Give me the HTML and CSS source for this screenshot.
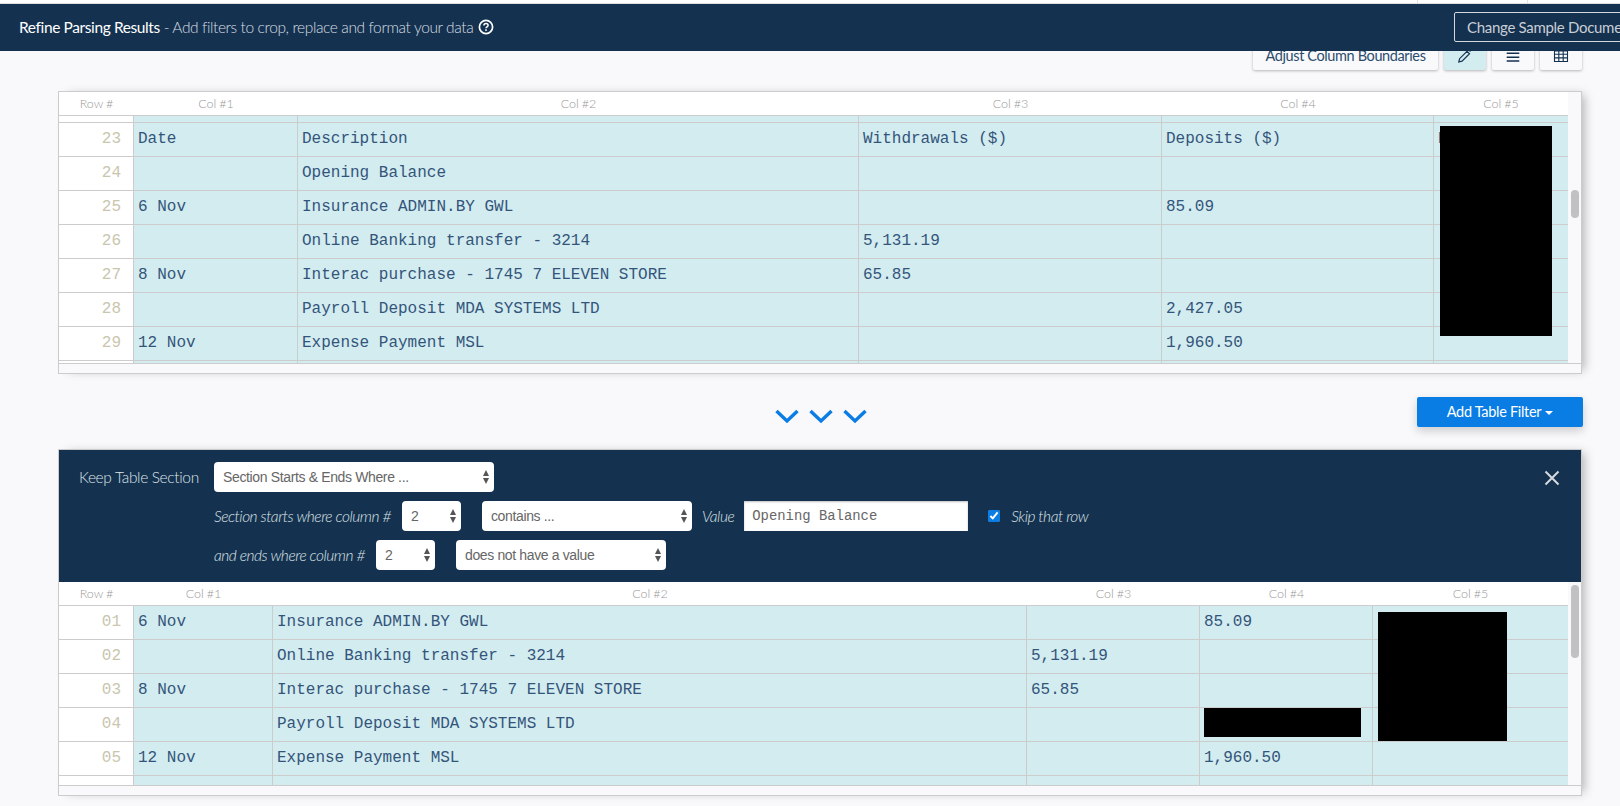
FILE: index.html
```html
<!DOCTYPE html>
<html lang="en">
<head>
    <meta charset="UTF-8">
    <title>Refine Parsing Results</title>
    <link rel="stylesheet" href="styles.css">
</head>
<body>
    <div class="top-strip"></div>
    <header class="page-header">
        <h1 class="page-title"><b>Refine Parsing Results</b> - Add filters to crop, replace and format your data</h1>
        <svg class="help-icon" viewBox="0 0 16 16" width="16" height="16">
            <circle cx="8" cy="8" r="6.600" fill="none" stroke="#fff" stroke-width="1.700"/>
            <path d="M5.900 6.400c0-1.300 1-2 2.100-2s2.100.7 2.100 1.800c0 1.600-2.100 1.600-2.100 3.100" fill="none" stroke="#fff" stroke-width="1.500"/>
            <rect x="7.200" y="10.300" width="1.600" height="1.600" fill="#fff"/>
        </svg>
        <button class="btn-outline">Change Sample Document</button>
    </header>

    <main class="content">
        <div class="toolbar">
            <button class="tool-btn tool-text">Adjust Column Boundaries</button>
            <button class="tool-btn tool-icon tool-active">
                <svg viewBox="0 0 16 16" width="16" height="16"><path d="M1.800 13l.8-3.300L10 2.300l2.500 2.500L5 12.200zM12.500 1.500l1 1" fill="none" stroke="#143250" stroke-width="1.200"/></svg>
            </button>
            <button class="tool-btn tool-icon">
                <svg viewBox="0 0 16 16" width="16" height="16"><path d="M1.700 4.300h12.600M1.700 8.300h12.600M1.700 12h12.600" stroke="#143250" stroke-width="1.500"/></svg>
            </button>
            <button class="tool-btn tool-icon">
                <svg viewBox="0 0 16 16" width="16" height="16"><path d="M1.500 2v10.500h13V2zM1.500 5.300h13M1.500 8.900h13M5.800 2v10.500M10.200 2v10.500" fill="none" stroke="#143250" stroke-width="1.100"/></svg>
            </button>
        </div>

        <section class="result-box">
            <div class="result-body">
                <table class="data-table table-one">
                    <colgroup><col class="c-row"><col class="c1"><col class="c2"><col class="c3"><col class="c4"><col class="c5"></colgroup>
                    <thead><tr><th>Row #</th><th>Col #1</th><th>Col #2</th><th>Col #3</th><th>Col #4</th><th>Col #5</th></tr></thead>
                    <tbody>
                        <tr class="sliver-top"><td></td><td></td><td></td><td></td><td></td><td></td></tr>
                        <tr><td>23</td><td>Date</td><td>Description</td><td>Withdrawals ($)</td><td>Deposits ($)</td><td>B</td></tr>
                        <tr><td>24</td><td></td><td>Opening Balance</td><td></td><td></td><td></td></tr>
                        <tr><td>25</td><td>6 Nov</td><td>Insurance ADMIN.BY GWL</td><td></td><td>85.09</td><td></td></tr>
                        <tr><td>26</td><td></td><td>Online Banking transfer - 3214</td><td>5,131.19</td><td></td><td></td></tr>
                        <tr><td>27</td><td>8 Nov</td><td>Interac purchase - 1745 7 ELEVEN STORE</td><td>65.85</td><td></td><td></td></tr>
                        <tr><td>28</td><td></td><td>Payroll Deposit MDA SYSTEMS LTD</td><td></td><td>2,427.05</td><td></td></tr>
                        <tr><td>29</td><td>12 Nov</td><td>Expense Payment MSL</td><td></td><td>1,960.50</td><td></td></tr>
                        <tr class="sliver-bottom"><td></td><td></td><td></td><td></td><td></td><td></td></tr>
                    </tbody>
                </table>
                <div class="scroll-track"><div class="scroll-thumb thumb-one"></div></div>
                <div class="redact redact-a"></div>
            </div>
            <div class="hscroll-track"></div>
        </section>

        <div class="filter-bar">
            <div class="chevrons">
                <svg viewBox="0 0 26 16" width="26" height="16"><path d="M2.500 3L13 13 23.500 3" fill="none" stroke="#0a7de4" stroke-width="3.400"/></svg>
                <svg viewBox="0 0 26 16" width="26" height="16"><path d="M2.500 3L13 13 23.500 3" fill="none" stroke="#0a7de4" stroke-width="3.400"/></svg>
                <svg viewBox="0 0 26 16" width="26" height="16"><path d="M2.500 3L13 13 23.500 3" fill="none" stroke="#0a7de4" stroke-width="3.400"/></svg>
            </div>
            <button class="btn-primary">Add Table Filter<span class="caret"></span></button>
        </div>

        <section class="result-box">
            <div class="filter-panel">
                <div class="filter-main">
                    <span class="filter-name">Keep Table Section</span>
                    <div class="filter-rows">
                        <div class="filter-row">
                            <span class="select-wrap w-mode"><select><option>Section Starts &amp; Ends Where ...</option></select></span>
                        </div>
                        <div class="filter-row">
                            <em>Section starts where column #</em>
                            <span class="select-wrap w-num"><select><option>2</option></select></span>
                            <span class="select-wrap w-contains"><select><option>contains ...</option></select></span>
                            <em>Value</em>
                            <input class="value-input" type="text" value="Opening Balance">
                            <label class="skip-label"><input type="checkbox" checked><em>Skip that row</em></label>
                        </div>
                        <div class="filter-row">
                            <em>and ends where column #</em>
                            <span class="select-wrap w-num"><select><option>2</option></select></span>
                            <span class="select-wrap w-novalue"><select><option>does not have a value</option></select></span>
                        </div>
                    </div>
                </div>
                <svg class="close-icon" viewBox="0 0 16 16" width="16" height="16"><path d="M1.500 1.500l13 13M14.500 1.500l-13 13" stroke="#d5d9de" stroke-width="2"/></svg>
            </div>
            <div class="result-body">
                <table class="data-table table-two">
                    <colgroup><col class="c-row"><col class="c1"><col class="c2"><col class="c3"><col class="c4"><col class="c5"></colgroup>
                    <thead><tr><th>Row #</th><th>Col #1</th><th>Col #2</th><th>Col #3</th><th>Col #4</th><th>Col #5</th></tr></thead>
                    <tbody>
                        <tr><td>01</td><td>6 Nov</td><td>Insurance ADMIN.BY GWL</td><td></td><td>85.09</td><td></td></tr>
                        <tr><td>02</td><td></td><td>Online Banking transfer - 3214</td><td>5,131.19</td><td></td><td></td></tr>
                        <tr><td>03</td><td>8 Nov</td><td>Interac purchase - 1745 7 ELEVEN STORE</td><td>65.85</td><td></td><td></td></tr>
                        <tr><td>04</td><td></td><td>Payroll Deposit MDA SYSTEMS LTD</td><td></td><td></td><td></td></tr>
                        <tr><td>05</td><td>12 Nov</td><td>Expense Payment MSL</td><td></td><td>1,960.50</td><td></td></tr>
                        <tr class="sliver-end"><td></td><td></td><td></td><td></td><td></td><td></td></tr>
                    </tbody>
                </table>
                <div class="scroll-track"><div class="scroll-thumb thumb-two"></div></div>
                <div class="redact redact-b"></div>
                <div class="redact redact-c"></div>
            </div>
            <div class="hscroll-track"></div>
        </section>
    </main>
</body>
</html>
```

FILE: styles.css
```css
*
{
    margin: 0;
    padding: 0;
    box-sizing: border-box;
}

html, body
{
    height: 806px;
    overflow: hidden;
}

body
{
    background: #f9f9fc;
    color: #143250;
    font-family: Lato, "Open Sans", sans-serif;
}

.top-strip
{
    height: 4px;
    background:
        linear-gradient(#e2e2e2, #e2e2e2) 1417px 0 / 1px 4px no-repeat,
        linear-gradient(#e2e2e2, #e2e2e2) 1527px 0 / 1px 4px no-repeat,
        #fff;
    border-bottom: 1px solid #ddd;
}

.page-header
{
    height: 47px;
    background: #143250;
    display: flex;
    align-items: center;
    padding: 0 0 2px 19px;
    position: relative;
    z-index: 2;
    overflow: hidden;
}

.page-title
{
    font-size: 15.500px;
    font-weight: 300;
    letter-spacing: -.39px;
    color: #d8dce1;
    white-space: nowrap;
}

.page-title b
{
    font-weight: 400;
    color: #fff;
}

.help-icon
{
    margin-left: 5px;
}

.btn-outline
{
    margin-left: auto;
    margin-right: -60px;
    width: 226px;
    height: 30px;
    flex: none;
    background: none;
    border: 1px solid #d3d8de;
    border-radius: 2px;
    color: #c9ced5;
    font: 400 15px Lato, sans-serif;
    letter-spacing: -.3px;
    text-align: left;
    padding-left: 12px;
    white-space: nowrap;
}

.content
{
    padding: 0 38px 0 58px;
}

.toolbar
{
    display: flex;
    justify-content: flex-end;
    gap: 6px;
    margin-top: -11px;
    height: 30px;
}

.tool-btn
{
    height: 30px;
    background: #f9f9fc;
    border: 0;
    border-radius: 2px;
    box-shadow: 0 1px 3px rgba(0, 0, 0, .28);
    color: #2b4c6c;
    font: 400 14.500px Lato, sans-serif;
    letter-spacing: -.38px;
}

.tool-text
{
    width: 185px;
}

.tool-icon
{
    width: 42px;
    padding-top: 4px;
    display: flex;
    align-items: center;
    justify-content: center;
}

.tool-active
{
    background: #d3ecf0;
}

.result-box
{
    width: 1524px;
    border: 1px solid #ccc;
    background: #f9f9fc;
    box-shadow: 6px 0 10px -4px rgba(0, 0, 0, .3);
}

.toolbar + .result-box
{
    margin-top: 21px;
}

.result-body
{
    display: flex;
    position: relative;
}

.data-table
{
    width: 1509px;
    flex: none;
    table-layout: fixed;
    border-collapse: separate;
    border-spacing: 0;
}

.data-table th
{
    height: 24px;
    background: #fff;
    border-bottom: 1px solid #ccc;
    color: #999;
    font: 300 12.500px Lato, sans-serif;
    letter-spacing: -.1px;
    vertical-align: middle;
}

.data-table td
{
    height: 34px;
    background: #d3ecf0;
    border-right: 1px solid #ccc;
    border-bottom: 1px solid #ccc;
    padding: 0 4px 2px;
    color: #34557a;
    font: 400 16px "Liberation Mono", monospace;
    white-space: nowrap;
    overflow: hidden;
}

.data-table td:first-child
{
    background: #fff;
    color: #c9c6ae;
    text-align: right;
    padding-right: 12px;
}

.data-table td:last-child
{
    border-right: 0;
}

.c-row { width: 75px; }

.table-one .c1 { width: 164px; }
.table-one .c2 { width: 561px; }
.table-one .c3 { width: 303px; }
.table-one .c4 { width: 272px; }
.table-one .c5 { width: 134px; }

.table-two .c1 { width: 139px; }
.table-two .c2 { width: 754px; }
.table-two .c3 { width: 173px; }
.table-two .c4 { width: 173px; }
.table-two .c5 { width: 195px; }

.data-table .sliver-top td
{
    height: 7px;
    padding: 0;
}

.data-table .sliver-bottom td
{
    height: 2px;
    padding: 0;
    border-bottom: 0;
}

.data-table .sliver-end td
{
    height: 9px;
    padding: 0;
    border-bottom: 0;
}

.scroll-track
{
    flex: 1;
    position: relative;
}

.scroll-thumb
{
    position: absolute;
    left: 3px;
    width: 8px;
    background: #c1c1c1;
    border-radius: 4px;
}

.thumb-one
{
    top: 98px;
    height: 28px;
}

.thumb-two
{
    top: 3px;
    height: 73px;
}

.hscroll-track
{
    height: 10px;
    border-top: 1px solid #ccc;
}

.redact
{
    position: absolute;
    background: #000;
}

.redact-a
{
    left: 1381px;
    top: 34px;
    width: 112px;
    height: 210px;
}

.redact-b
{
    left: 1319px;
    top: 30px;
    width: 129px;
    height: 129px;
}

.redact-c
{
    left: 1145px;
    top: 126px;
    width: 157px;
    height: 29px;
}

.filter-bar
{
    display: flex;
    align-items: center;
    height: 75px;
}

.chevrons
{
    display: flex;
    gap: 8px;
    align-self: flex-start;
    margin: 34px 0 0 716px;
}

.btn-primary
{
    margin-left: auto;
    margin-right: -1px;
    width: 166px;
    height: 30px;
    background: #0a7de4;
    border: 0;
    border-radius: 2px;
    box-shadow: 0 4px 10px rgba(0, 0, 0, .18);
    color: #fff;
    font: 400 14.500px Lato, sans-serif;
    letter-spacing: -.3px;
}

.caret
{
    display: inline-block;
    margin-left: 4px;
    vertical-align: 2px;
    border-left: 4.500px solid transparent;
    border-right: 4.500px solid transparent;
    border-top: 4px solid #fff;
}

.filter-panel
{
    height: 132px;
    background: #143250;
    color: #dfe3e7;
    display: flex;
    justify-content: space-between;
    padding: 12px 21px 0 20px;
}

.filter-name
{
    width: 135px;
    font-size: 15.500px;
    font-weight: 300;
    letter-spacing: -.35px;
    white-space: nowrap;
    line-height: 30px;
}

.filter-main
{
    display: flex;
}

.filter-rows
{
    display: flex;
    flex-direction: column;
    gap: 9px;
}

.filter-row
{
    display: flex;
    align-items: center;
    height: 30px;
    font-size: 15.500px;
}

.filter-row em
{
    font-weight: 300;
    letter-spacing: -.47px;
    white-space: nowrap;
}

.select-wrap
{
    display: block;
    position: relative;
    height: 30px;
}

.select-wrap select
{
    appearance: none;
    display: block;
    width: 100%;
    height: 30px;
    background: #fff;
    border: 0;
    border-radius: 4px;
    padding-left: 9px;
    color: #666;
    font: 400 14px "Liberation Sans", sans-serif;
    letter-spacing: -.36px;
}

.select-wrap::before, .select-wrap::after
{
    content: "";
    position: absolute;
    right: 5px;
    border-left: 3.500px solid transparent;
    border-right: 3.500px solid transparent;
}

.select-wrap::before
{
    top: 8px;
    border-bottom: 6px solid #555;
}

.select-wrap::after
{
    top: 16px;
    border-top: 6px solid #555;
}

.w-mode { width: 280px; }
.w-num { width: 59px; margin-left: 11px; }
.w-contains { width: 210px; margin-left: 21px; margin-right: 10px; }
.w-novalue { width: 210px; margin-left: 21px; }

.value-input
{
    width: 224px;
    height: 30px;
    margin-left: 10px;
    background: #fff;
    border: 0;
    box-shadow: inset 0 1px 2px rgba(0, 0, 0, .25);
    padding-left: 8px;
    color: #666;
    font: 400 13.900px "Liberation Mono", monospace;
}

.skip-label
{
    display: flex;
    align-items: center;
    gap: 11px;
    margin-left: 20px;
}

.skip-label input
{
    width: 12px;
    height: 12px;
    accent-color: #0a7de4;
}

.close-icon
{
    margin-top: 8px;
}
```
